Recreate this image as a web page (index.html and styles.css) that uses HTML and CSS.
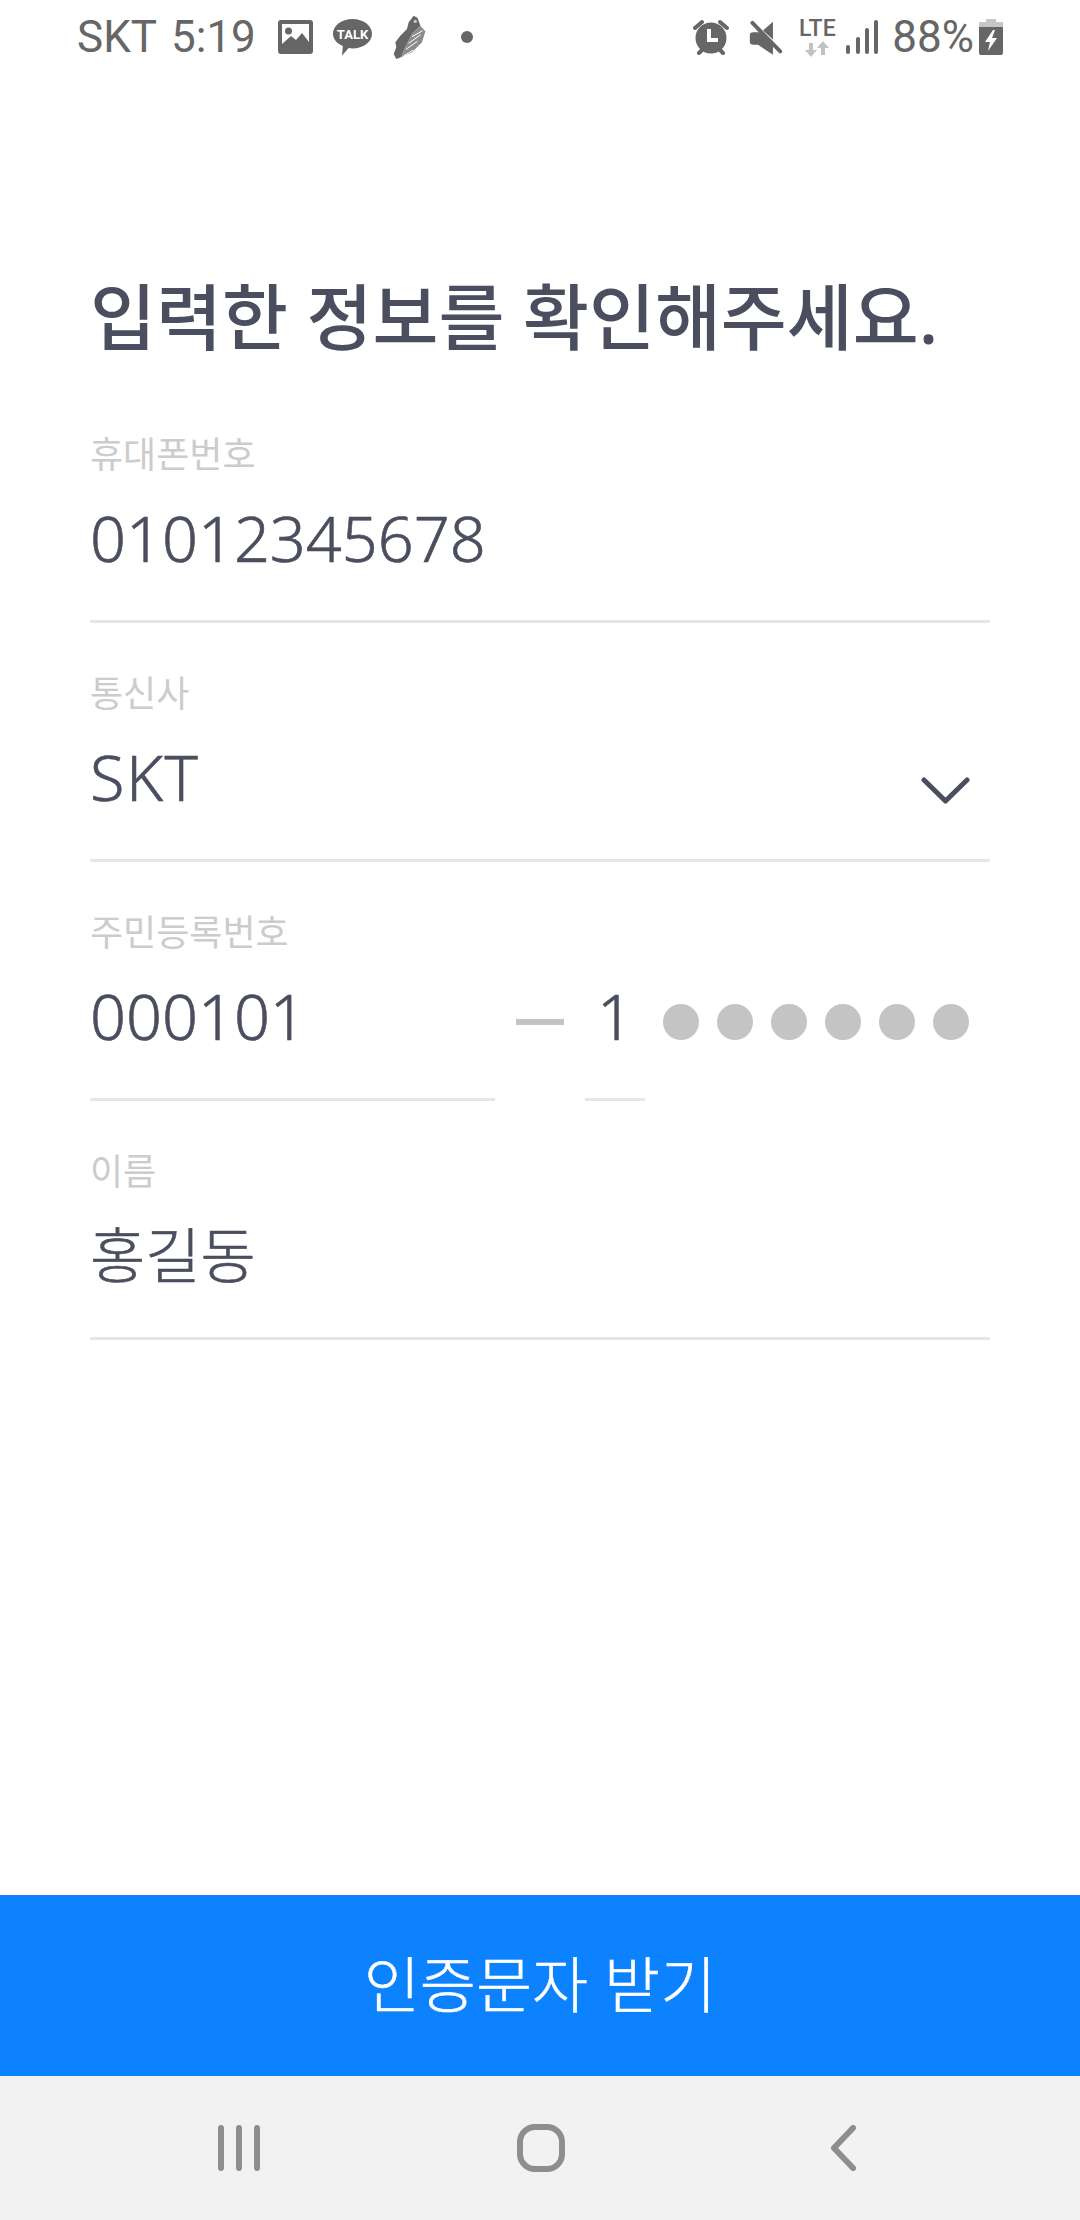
FILE: index.html
```html
<!DOCTYPE html>
<html lang="ko">
<head>
  <meta charset="UTF-8" />
  <title>입력한 정보를 확인해주세요</title>
  <link rel="stylesheet" href="styles.css">
</head>
<body>
  <div class="status-bar">
    <div class="status-left">
      <span class="carrier">SKT</span>
      <span class="clock">5:19</span>
      <svg class="ic-image" width="35" height="34" viewBox="0 0 35 34">
        <path fill-rule="evenodd" fill="#666" d="M3 0h29a3 3 0 0 1 3 3v28a3 3 0 0 1-3 3H3a3 3 0 0 1-3-3V3a3 3 0 0 1 3-3zM4 4v20l9-8 5 4 6-7 7 9V4z"/>
        <circle cx="10.500" cy="11" r="3.500" fill="#666"/>
      </svg>
      <svg class="ic-talk" width="39" height="37" viewBox="0 0 39 37">
        <path fill="#666" d="M19.500 0C30.300 0 39 6.600 39 14.700S30.300 29.400 19.500 29.400c-1.300 0-2.600-.1-3.800-.3L9 36.500l.8-9.500C3.900 24.500 0 20 0 14.700 0 6.600 8.700 0 19.500 0z"/>
        <text x="19.500" y="19.500" text-anchor="middle" class="talk-text">TALK</text>
      </svg>
      <svg class="ic-shoe" width="35" height="46" viewBox="0 0 105 138">
        <path fill="#666" d="M65 5l12 7 8 23-25 25-20 40-13 30-14 5-8-15 8-20-3-15 15-20 20-20 5-20z"/>
        <path fill="#8c8c8c" d="M85 35l15 17-10 33-30 30-33 15 13-30 20-40z"/>
        <path stroke="#fff" stroke-width="3" fill="none" d="M34 126l30-18M42 106l34-24M50 88l36-26M60 68l32-18"/>
        <circle cx="70" cy="22" r="5" fill="#ccc"/>
      </svg>
      <span class="notif-dot"></span>
    </div>
    <div class="status-right">
      <svg class="ic-alarm" width="36" height="36" viewBox="0 0 36 36">
        <circle cx="18" cy="19" r="15.500" fill="#666"/>
        <path d="M16 10v11h9" stroke="#fff" stroke-width="4" fill="none"/>
        <path d="M2 9l7-6M34 9l-7-6M6 34l3-3M30 34l-3-3" stroke="#666" stroke-width="4" stroke-linecap="round"/>
      </svg>
      <svg class="ic-mute" width="35" height="37" viewBox="0 0 105 112">
        <path fill="#666" d="M15 40h20l40 40v28L30 78H15Q5 78 5 68V50Q5 40 15 40z"/>
        <path fill="#666" d="M45 35L75 8v54z"/>
        <path d="M13 12l84 86" stroke="#666" stroke-width="12" stroke-linecap="round"/>
      </svg>
      <div class="lte">
        <span class="lte-text">LTE</span>
        <svg width="26" height="16" viewBox="0 0 26 16">
          <path fill="#c2c2c2" d="M5 2h4v7h4l-6 7-6-7h4zM17 14h4V7h4l-6-7-6 7h4z"/>
        </svg>
      </div>
      <svg class="ic-signal" width="32" height="34" viewBox="0 0 32 34">
        <path stroke="#666" stroke-width="4" stroke-linecap="round" d="M2 27v5M12 19v13M21 10v22M30 2v30"/>
      </svg>
      <span class="battery-pct">88%</span>
      <svg class="ic-battery" width="24" height="36" viewBox="0 0 24 36">
        <path fill="#c6c6c6" d="M7 0h10v3h7v7H0V3h7z"/>
        <path fill-rule="evenodd" fill="#666" d="M0 8h24v26a2 2 0 0 1-2 2H2a2 2 0 0 1-2-2zM14 11L6 23h5l-2 9 9-13h-5l3-8z"/>
      </svg>
    </div>
  </div>

  <main class="content">
    <h1 class="title">입력한 정보를 확인해주세요.</h1>

    <div class="field">
      <div class="label">휴대폰번호</div>
      <div class="value">01012345678</div>
    </div>

    <div class="field">
      <div class="label">통신사</div>
      <div class="select-row">
        <div class="value value-carrier">SKT</div>
        <svg class="chevron" width="49" height="27" viewBox="0 0 49 27">
          <path d="M3 3l21.500 21L46 3" stroke="#4a4e5e" stroke-width="5" fill="none" stroke-linecap="round" stroke-linejoin="round"/>
        </svg>
      </div>
    </div>

    <div class="field field-ssn">
      <div class="label">주민등록번호</div>
      <div class="ssn-row">
        <div class="value ssn-front">000101</div>
        <div class="ssn-dash"></div>
        <div class="value ssn-back">1</div>
        <div class="ssn-dots">
          <span class="dot"></span>
          <span class="dot"></span>
          <span class="dot"></span>
          <span class="dot"></span>
          <span class="dot"></span>
          <span class="dot"></span>
        </div>
      </div>
    </div>

    <div class="field">
      <div class="label">이름</div>
      <div class="value value-name">홍길동</div>
    </div>
  </main>

  <button class="submit">인증문자 받기</button>

  <nav class="nav-bar">
    <svg class="nav-menu" width="42" height="46" viewBox="0 0 42 46">
      <path d="M3 3v40M21 3v40M39 3v40" stroke="#8e8e8e" stroke-width="6" stroke-linecap="round"/>
    </svg>
    <svg class="nav-home" width="48" height="48" viewBox="0 0 48 48">
      <rect x="3" y="3" width="42" height="42" rx="15" fill="none" stroke="#8e8e8e" stroke-width="6"/>
    </svg>
    <svg class="nav-back" width="26" height="46" viewBox="0 0 26 46">
      <path d="M23 3L4 23l19 20" fill="none" stroke="#8e8e8e" stroke-width="6" stroke-linecap="round" stroke-linejoin="round"/>
    </svg>
  </nav>
</body>
</html>
```

FILE: styles.css
```css
* {
  box-sizing: border-box;
}

html, body {
  margin: 0;
  padding: 0;
}

body {
  width: 1080px;
  height: 2220px;
  display: flex;
  flex-direction: column;
  background: #fff;
  font-family: "Noto Sans", "Noto Sans CJK KR", sans-serif;
  color: #4a4e5e;
  overflow: hidden;
}

.status-bar {
  height: 72px;
  display: flex;
  justify-content: space-between;
  align-items: center;
  padding: 2px 77px 0 77px;
  color: #666;
  font-family: Roboto, sans-serif;
  font-size: 44px;
  flex: none;
}

.status-left, .status-right {
  display: flex;
  align-items: center;
}

.clock {
  margin-left: 14px;
}

.ic-image {
  margin-left: 22px;
}

.ic-talk {
  margin-left: 20px;
}

.talk-text {
  font-family: Roboto, sans-serif;
  font-size: 13px;
  font-weight: 700;
  fill: #fff;
}

.ic-shoe {
  margin-left: 20px;
}

.notif-dot {
  width: 12px;
  height: 12px;
  border-radius: 50%;
  background: #666;
  margin-left: 34px;
}

.ic-mute {
  margin-left: 19px;
}

.lte {
  display: flex;
  flex-direction: column;
  align-items: center;
  margin-left: 17px;
  width: 34px;
}

.lte-text {
  font-size: 23px;
  line-height: 22px;
  font-weight: 500;
}

.lte svg {
  margin-top: 1px;
}

.ic-signal {
  margin-left: 12px;
}

.battery-pct {
  margin-left: 14px;
}

.ic-battery {
  margin-left: 5px;
}

.content {
  flex: 1;
  padding: 0 90px;
}

.title {
  margin: 0;
  padding-top: 198px;
  height: 312px;
  font-size: 71.700px;
  line-height: 92px;
  font-weight: 500;
  white-space: nowrap;
}

.field {
  height: 239px;
  border-bottom: 3px solid #e6e6e6;
  padding-top: 48px;
}

.label {
  font-size: 36px;
  line-height: 46px;
  color: #ccc;
  font-weight: 400;
}

.value {
  font-size: 63px;
  line-height: 84px;
  font-weight: 300;
  -webkit-text-stroke: 0.6px #4a4e5e;
  margin-top: 18px;
}

.value-carrier {
  letter-spacing: 1.500px;
}

.value-name {
  font-size: 60px;
}

.select-row {
  display: flex;
  justify-content: space-between;
}

.chevron {
  margin: 60px 20px 0 0;
}

.field-ssn {
  border-bottom: none;
}

.ssn-row {
  display: flex;
  align-items: flex-start;
}

.ssn-front {
  width: 405px;
  height: 127px;
  border-bottom: 3px solid #e6e6e6;
}

.ssn-dash {
  width: 48px;
  height: 6px;
  background: #c4c4c4;
  margin: 63px 21px 0;
}

.ssn-back {
  width: 60px;
  height: 127px;
  border-bottom: 3px solid #e6e6e6;
  text-align: center;
}

.ssn-dots {
  display: flex;
  gap: 18px;
  margin: 48px 0 0 18px;
}

.dot {
  width: 36px;
  height: 36px;
  border-radius: 50%;
  background: #c4c4c4;
}

.submit {
  flex: none;
  height: 181px;
  width: 100%;
  border: none;
  padding: 0 0 8px;
  background: #0d82ff;
  color: #fff;
  font-family: inherit;
  font-size: 61px;
  font-weight: 300;
  -webkit-text-stroke: 0.5px #fff;
}

.nav-bar {
  flex: none;
  height: 144px;
  background: #f2f2f2;
  display: flex;
  align-items: center;
  padding: 0 0 0 218px;
}

.nav-home {
  margin-left: 257px;
}

.nav-back {
  margin-left: 265px;
}
```
